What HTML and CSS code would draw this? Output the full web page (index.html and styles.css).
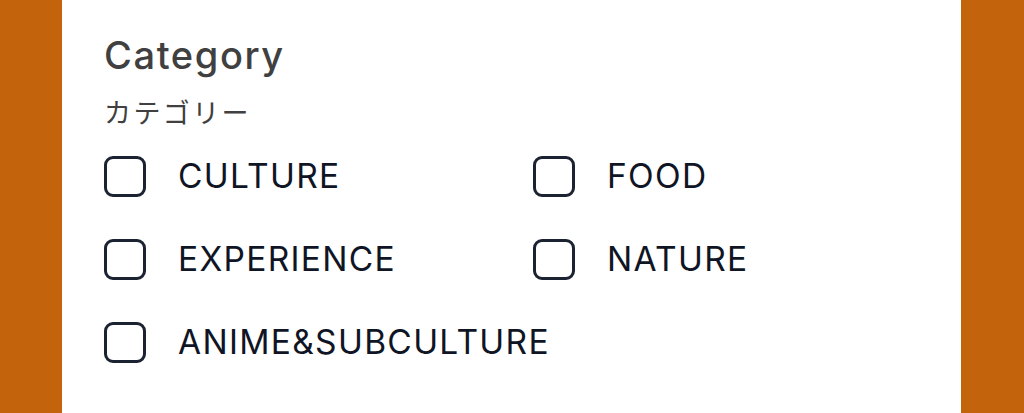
FILE: index.html
```html
<!DOCTYPE html>
<html lang="ja">
<head>
<meta charset="utf-8">
<title>Category</title>
<link rel="stylesheet" href="styles.css">
</head>
<body>
<div class="page">
  <section class="panel">
    <h2 class="title">Category</h2>
    <p class="subtitle">カテゴリー</p>
    <div class="options">
      <label class="option"><input type="checkbox" class="box"><span class="label">CULTURE</span></label>
      <label class="option"><input type="checkbox" class="box"><span class="label">FOOD</span></label>
      <label class="option"><input type="checkbox" class="box"><span class="label">EXPERIENCE</span></label>
      <label class="option"><input type="checkbox" class="box"><span class="label">NATURE</span></label>
      <label class="option"><input type="checkbox" class="box"><span class="label">ANIME&amp;SUBCULTURE</span></label>
    </div>
  </section>
</div>
</body>
</html>
```

FILE: styles.css
```css
html, body {
  margin: 0;
  padding: 0;
  height: 100%;
}
body {
  background: #c3630b;
  font-family: Inter, "Noto Sans CJK JP", sans-serif;
  overflow: hidden;
}
.page {
  padding: 0 63px 0 62px;
  height: 100%;
}
.panel {
  background: #ffffff;
  height: 100%;
  box-sizing: border-box;
  padding: 28px 42px 0 42px;
}
.title {
  margin: 0;
  font-size: 38px;
  font-weight: 500;
  line-height: 54px;
  color: #404040;
  letter-spacing: 1.6px;
}
.subtitle {
  margin: 12px 0 0 0;
  font-family: "Noto Sans CJK JP", sans-serif;
  font-size: 27px;
  line-height: 36px;
  color: #404040;
  letter-spacing: 2.4px;
}
.options {
  margin-top: 26px;
  display: grid;
  grid-template-columns: 429px 1fr;
  row-gap: 42px;
}
.option {
  display: flex;
  align-items: center;
  gap: 32px;
  height: 41px;
}
.box {
  appearance: none;
  -webkit-appearance: none;
  margin: 0;
  width: 42px;
  height: 41px;
  box-sizing: border-box;
  border: 3px solid #1b2232;
  border-radius: 9px;
  background: #fff;
  flex: none;
}
.label {
  font-size: 33.5px;
  line-height: 41px;
  color: #0f1524;
  letter-spacing: 1.3px;
}
```
